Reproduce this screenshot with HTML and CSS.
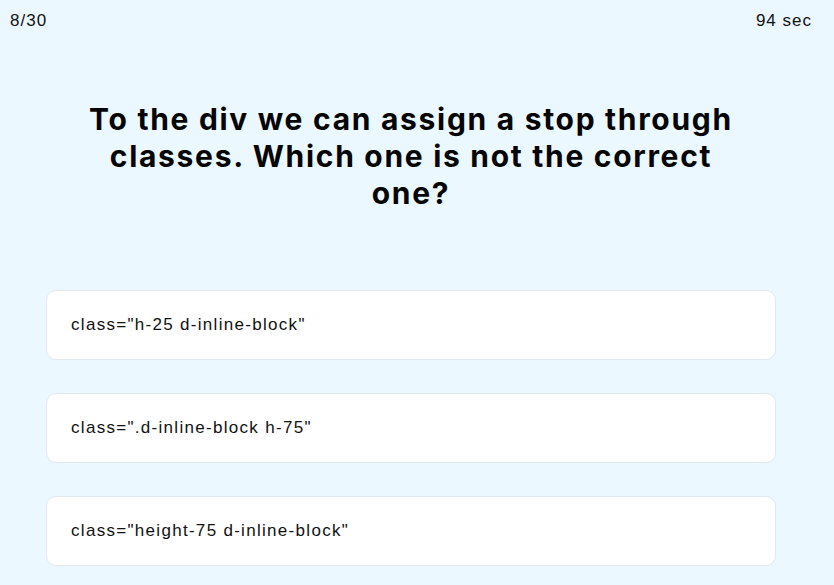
FILE: index.html
```html
<!DOCTYPE html>
<html>
<head>
<meta charset="utf-8">
<link rel="stylesheet" href="styles.css">
</head>
<body>
<div class="page">
  <header class="topbar">
    <span class="count">8/30</span>
    <span class="timer">94 sec</span>
  </header>
  <main class="quiz">
    <h1 class="question">To the div we can assign a stop through classes. Which one is not the correct one?</h1>
    <div class="answers">
      <div class="answer">class="h-25 d-inline-block"</div>
      <div class="answer">class=".d-inline-block h-75"</div>
      <div class="answer">class="height-75 d-inline-block"</div>
    </div>
  </main>
</div>
</body>
</html>
```
FILE: styles.css
```css
html, body {
  margin: 0;
  padding: 0;
  background: #ebf8ff;
}
.page {
  width: 834px;
  height: 585px;
  overflow: hidden;
  font-family: "Liberation Sans", Arial, sans-serif;
  color: #111;
}
.topbar {
  display: flex;
  justify-content: space-between;
  padding: 12px 22px 0 10px;
  font-size: 17px;
  line-height: 18px;
  letter-spacing: 1px;
}
.quiz {
  width: 730px;
  margin-left: 46px;
  padding-top: 71px;
}
.question {
  margin: 0 auto;
  max-width: 664px;
  text-align: center;
  font-family: Inter, "Noto Sans", sans-serif;
  font-weight: 700;
  font-size: 30px;
  line-height: 37px;
  letter-spacing: 1.7px;
  color: #050505;
}
.answers {
  display: flex;
  flex-direction: column;
  gap: 33px;
  margin-top: 78px;
}
.answer {
  box-sizing: border-box;
  height: 70px;
  display: flex;
  align-items: center;
  padding: 0 24px;
  background: #fff;
  border: 1px solid #e3e8ec;
  border-radius: 10px;
  font-size: 17px;
  letter-spacing: 1.3px;
  color: #111;
}
```
